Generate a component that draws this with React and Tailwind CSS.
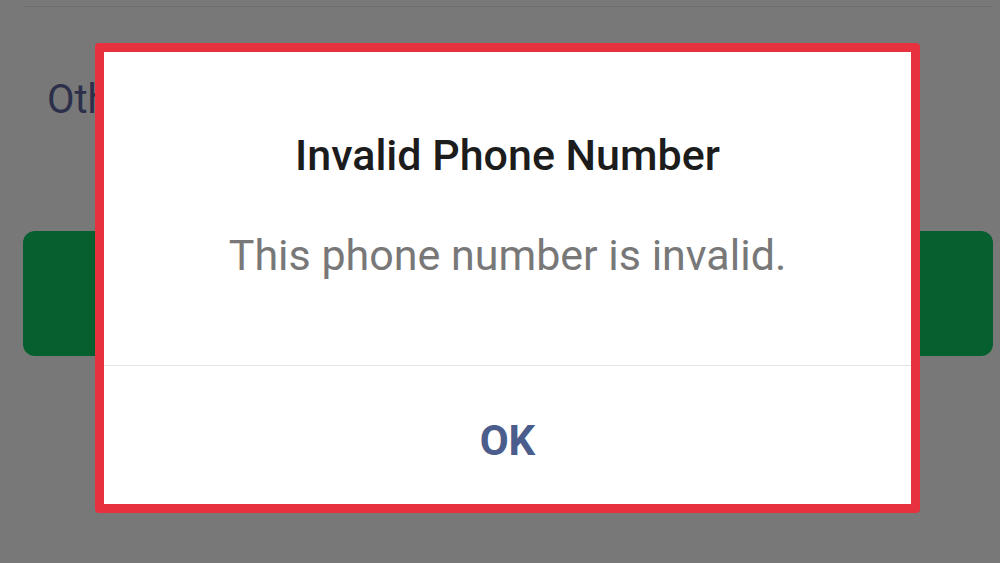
export default function App() {
  return (
    <div className="relative w-[1000px] h-[563px] overflow-hidden bg-[#787878]" style={{ fontFamily: 'Roboto, "Noto Sans", sans-serif' }}>
      {/* page behind the overlay */}
      <div className="flex flex-col pl-[23px] pr-[7px] pt-[6px]">
        <div className="h-px bg-[#6e6e6e]" />
        <div className="pl-[24px] pt-[69px] text-[40px] leading-[48px] text-[#2b2f4a]">Other</div>
        <div className="mt-[107px] h-[125px] rounded-[12px] bg-[#055f2f]" />
      </div>

      {/* dialog */}
      <div className="absolute left-[95px] top-[43px] w-[825px] h-[470px] rounded-[4px] border-[9px] border-[#e8313f] bg-white flex flex-col">
        <div className="h-[313px] flex flex-col items-center pt-[82px]">
          <div className="text-[43px] leading-[43px] font-medium text-[#1c1c1c]">Invalid Phone Number</div>
          <div className="mt-[57px] text-[43px] leading-[43px] text-[#787878]">This phone number is invalid.</div>
        </div>
        <div className="h-px bg-[#e4e4e4]" />
        <div className="flex-1 flex items-center justify-center pt-[12px]">
          <span className="text-[42px] leading-[42px] font-bold text-[#4a5d8c]">OK</span>
        </div>
      </div>
    </div>
  );
}
